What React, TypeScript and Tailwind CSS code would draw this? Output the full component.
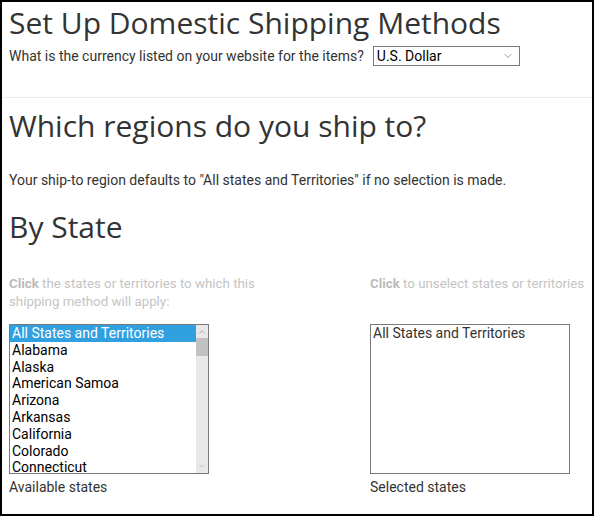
import { ChevronDown, ChevronUp } from "lucide-react";

const states = [
  "All States and Territories",
  "Alabama",
  "Alaska",
  "American Samoa",
  "Arizona",
  "Arkansas",
  "California",
  "Colorado",
  "Connecticut",
];

export default function App() {
  return (
    <div className="w-[594px] h-[516px] overflow-hidden border-2 border-black bg-white text-[#333] font-['Roboto',sans-serif] text-[14px] leading-[20px]">
      {/* Currency */}
      <div className="px-[7px] pt-[4px]">
        <h1 className="font-['Open_Sans',sans-serif] text-[30px] leading-[33px] font-normal text-[#333]">
          Set Up Domestic Shipping Methods
        </h1>
        <div className="mt-[7px] flex items-center gap-[9px]">
          <span>What is the currency listed on your website for the items?</span>
          <div className="w-[147px] h-[20px] border border-[#7a7a7a] flex items-center justify-between pl-[3px] pr-[5px] text-black">
            <span>U.S. Dollar</span>
            <ChevronDown className="w-[12px] h-[12px] text-[#555]" strokeWidth={1.2} />
          </div>
        </div>
      </div>

      <hr className="mt-[31px] border-t border-[#eee]" />

      {/* Regions */}
      <div className="px-[7px]">
        <h2 className="mt-[11px] font-['Open_Sans',sans-serif] text-[30px] leading-[33px] font-normal">
          Which regions do you ship to?
        </h2>
        <p className="mt-[28px]">
          Your ship-to region defaults to "All states and Territories" if no selection is made.
        </p>
        <h2 className="mt-[20px] font-['Open_Sans',sans-serif] text-[30px] leading-[33px] font-normal">
          By State
        </h2>

        <div className="mt-[32px] flex justify-between">
          {/* Available */}
          <div className="w-[260px]">
            <p className="text-[#c4c4c4] text-[13.3px] leading-[18px] h-[36px]">
              <b className="text-[#bbb]">Click</b> the states or territories to which this shipping method will apply:
            </p>
            <div className="mt-[13px] w-[200px] h-[150px] border border-[#7a7a7a] flex text-black">
              <ul className="flex-1 leading-[16.8px] overflow-hidden">
                {states.map((s, i) => (
                  <li
                    key={s}
                    className={
                      i === 0 ? "bg-[#30a0e0] text-white px-[2px]" : "px-[2px]"
                    }
                  >
                    {s}
                  </li>
                ))}
              </ul>
              <div className="w-[12px] bg-[#e8e8e8] flex flex-col items-center">
                <ChevronUp className="w-[10px] h-[10px] mt-[2px] text-[#888]" strokeWidth={1.5} />
                <div className="w-full h-[18px] bg-[#c1c1c1] mt-[1px]" />
                <div className="flex-1" />
                <ChevronDown className="w-[10px] h-[10px] mb-[2px] text-[#aaa]" strokeWidth={1.5} />
              </div>
            </div>
            <div className="mt-[3px]">Available states</div>
          </div>

          {/* Selected */}
          <div className="w-[215px]">
            <p className="text-[#c4c4c4] text-[13.3px] leading-[18px] h-[36px] whitespace-nowrap">
              <b className="text-[#bbb]">Click</b> to unselect states or territories
            </p>
            <div className="mt-[13px] w-[200px] h-[150px] border border-[#7a7a7a] px-[2px] leading-[16.8px]">
              All States and Territories
            </div>
            <div className="mt-[3px]">Selected states</div>
          </div>
        </div>
      </div>
    </div>
  );
}
